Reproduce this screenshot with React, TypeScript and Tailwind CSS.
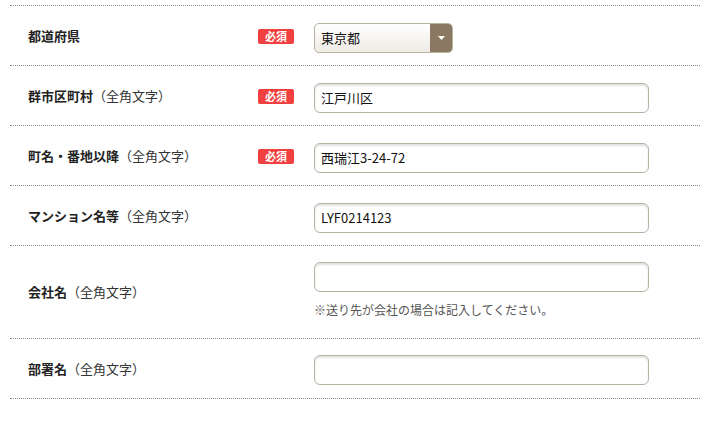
import React from "react";

const font = { fontFamily: '"Noto Sans CJK JP", "Noto Sans", sans-serif' };

function Badge() {
  return (
    <span className="flex h-[15px] w-[36px] items-center justify-center rounded-[2px] bg-[#f23f3f] text-[11px] font-bold leading-none text-white">
      必須
    </span>
  );
}

function Input({ value = "" }: { value?: string }) {
  return (
    <div className="flex h-[30px] w-[335px] items-center rounded-[6px] border border-[#b8b2a4] bg-white px-[6px] text-[13px] text-[#111] shadow-[inset_0_2px_2px_rgba(0,0,0,0.12)]">
      {value}
    </div>
  );
}

function Label({ main, sub }: { main: string; sub?: string }) {
  return (
    <div className="pl-[18px] text-[13px] text-[#222]">
      <span className="font-bold">{main}</span>
      {sub && <span className="font-normal text-[#333]">{sub}</span>}
    </div>
  );
}

export default function App() {
  const sub = "（全角文字）";
  return (
    <div className="min-h-[423px] w-[702px] bg-white" style={font}>
      <div className="ml-[10px] mt-[5px] w-[690px] border-t border-dotted border-[#8a8a8a]">
        {/* 都道府県 */}
        <div className="grid h-[60px] grid-cols-[248px_56px_1fr] items-center border-b border-dotted border-[#8a8a8a]">
          <Label main="都道府県" />
          <div className="pt-[2px]"><Badge /></div>
          <div className="pt-[4px]">
            <div className="flex h-[30px] w-[139px] overflow-hidden rounded-[5px] border border-[#b8b2a4] bg-gradient-to-b from-white to-[#efebe5]">
              <div className="flex flex-1 items-center px-[6px] text-[13px] text-[#111]">東京都</div>
              <div className="flex w-[22px] items-center justify-center bg-[#8a7862]">
                <svg width="7" height="4" viewBox="0 0 7 4"><path d="M0 0 L7 0 L3.5 4 Z" fill="#fff" /></svg>
              </div>
            </div>
          </div>
        </div>
        {/* 群市区町村 */}
        <div className="grid h-[60px] grid-cols-[248px_56px_1fr] items-center border-b border-dotted border-[#8a8a8a]">
          <Label main="群市区町村" sub={sub} />
          <div className="pt-[2px]"><Badge /></div>
          <div className="pt-[4px]"><Input value="江戸川区" /></div>
        </div>
        {/* 町名 */}
        <div className="grid h-[60px] grid-cols-[248px_56px_1fr] items-center border-b border-dotted border-[#8a8a8a]">
          <Label main="町名・番地以降" sub={sub} />
          <div className="pt-[2px]"><Badge /></div>
          <div className="pt-[4px]"><Input value="西瑞江3-24-72" /></div>
        </div>
        {/* マンション名等 */}
        <div className="grid h-[60px] grid-cols-[248px_56px_1fr] items-center border-b border-dotted border-[#8a8a8a]">
          <Label main="マンション名等" sub={sub} />
          <div />
          <div className="pt-[4px]"><Input value="LYF0214123" /></div>
        </div>
        {/* 会社名 */}
        <div className="grid h-[93px] grid-cols-[248px_56px_1fr] items-center border-b border-dotted border-[#8a8a8a]">
          <Label main="会社名" sub={sub} />
          <div />
          <div className="flex flex-col gap-[10px] pb-[4px]">
            <Input />
            <div className="text-[12px] leading-[16px] text-[#555]">※送り先が会社の場合は記入してください。</div>
          </div>
        </div>
        {/* 部署名 */}
        <div className="grid h-[60px] grid-cols-[248px_56px_1fr] items-center border-b border-dotted border-[#8a8a8a]">
          <Label main="部署名" sub={sub} />
          <div />
          <div className="pt-[2px]"><Input /></div>
        </div>
      </div>
    </div>
  );
}
